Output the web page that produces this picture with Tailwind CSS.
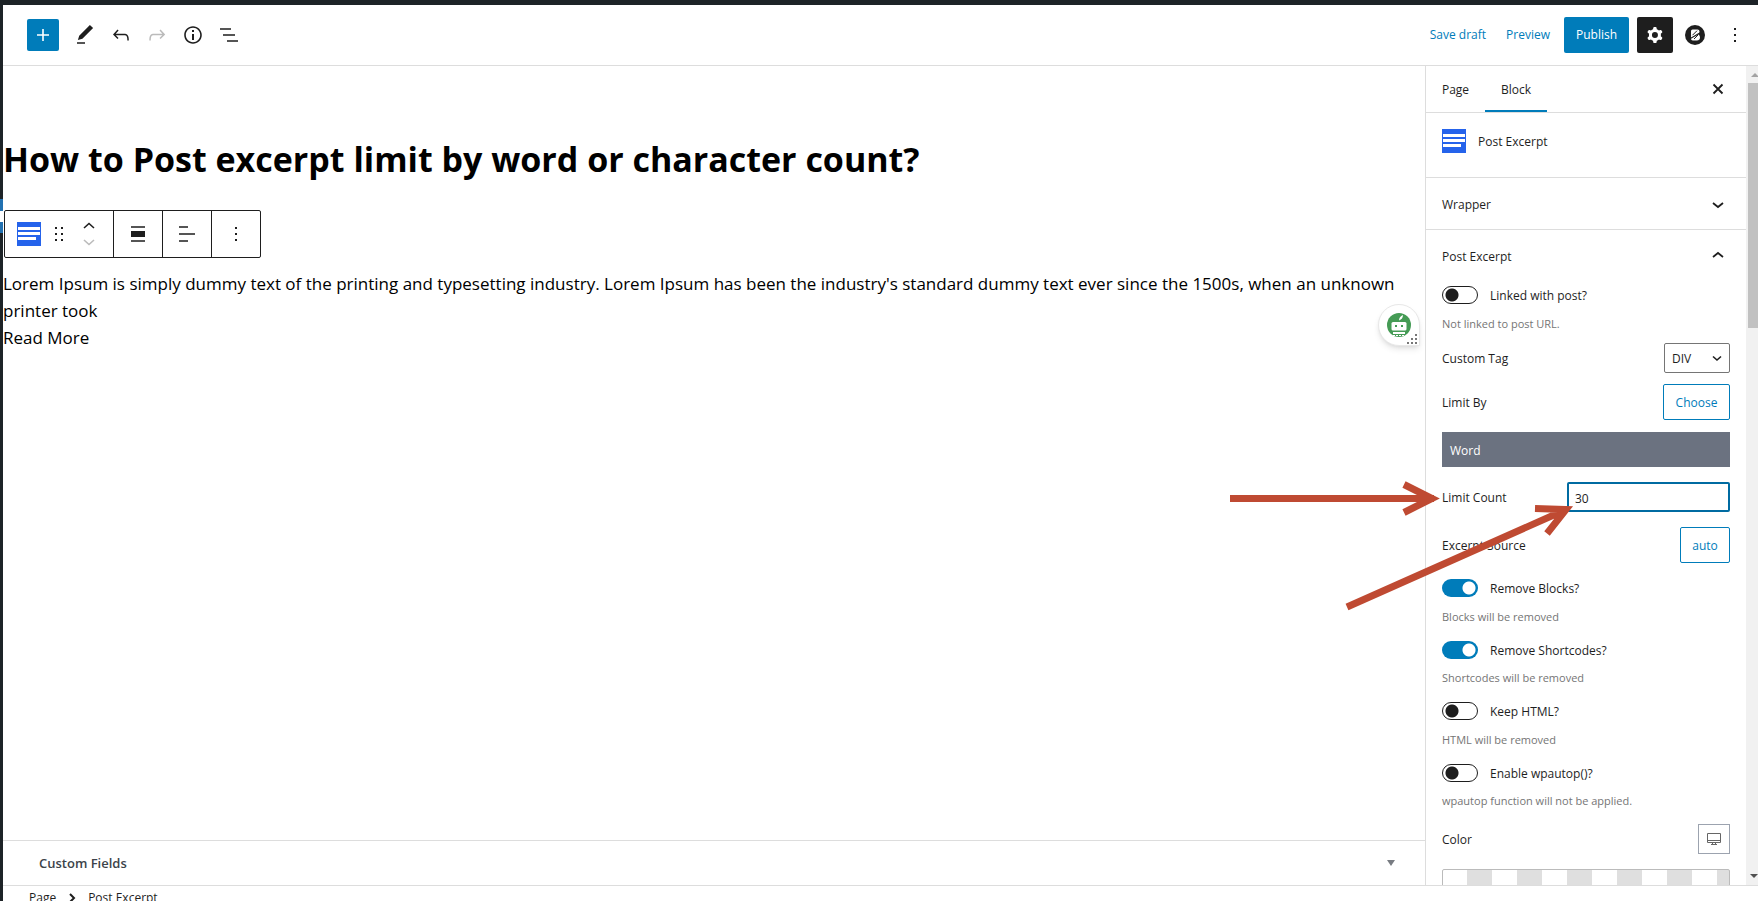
<!DOCTYPE html>
<html lang="en">
<head>
<meta charset="utf-8">
<title>Edit Page</title>
<script src="https://cdn.jsdelivr.net/npm/@tailwindcss/browser@4"></script>
</head>
<body class="h-screen overflow-hidden flex flex-col bg-white text-[#1e1e1e] text-[12px] leading-4 font-['Open_Sans','Noto_Sans',sans-serif]">
<div class="h-[5px] shrink-0 bg-[#1d2327]"></div>
<div class="flex flex-1 min-h-0">
  <div class="w-[3px] shrink-0 bg-[#1d2327] flex flex-col pt-[194px]">
    <div class="h-[34px] bg-[#2271b1] flex items-center"><span class="block w-full h-[11px] bg-white"></span></div>
  </div>
  <div class="flex-1 min-w-0 flex flex-col">
    <header class="h-[61px] shrink-0 border-b border-[#ddd] flex items-center justify-between pl-6 pr-[11px]">
      <div class="flex items-center gap-3">
        <button aria-label="Add block" class="size-8 rounded-[2px] bg-[#007cba] text-white grid place-items-center mr-[2px]"><svg width="24" height="24" viewBox="0 0 24 24" fill="currentColor"><path d="M18 11.2h-5.2V6h-1.6v5.2H6v1.6h5.2V18h1.6v-5.2H18z"/></svg></button>
        <button aria-label="Tools" class="w-6"><svg width="24" height="24" viewBox="0 0 24 24" fill="currentColor"><path d="M20.1 5.1 16.9 2 6.2 12.7l-1.3 4.4 4.5-1.3L20.1 5.1zM4 19.2h8v1.6H4z"/></svg></button>
        <button aria-label="Undo" class="w-6"><svg width="24" height="24" viewBox="0 0 24 24" fill="currentColor"><path d="M18.3 11.7c-.6-.6-1.4-.9-2.3-.9H6.7l2.9-3.3-1.1-1-4.5 5L8.500 16l1-1-2.700-2.700H16c.5 0 .9.2 1.300.5 1 1 1 3.400 1 4.500v.3h1.500v-.2c0-1.500 0-4.300-1.500-5.700z"/></svg></button>
        <button aria-label="Redo" class="w-6 text-[#bbb]"><svg width="24" height="24" viewBox="0 0 24 24" fill="currentColor"><path d="M15.600 6.500l-1.100 1 2.900 3.300H8c-.9 0-1.700.3-2.300.9-1.400 1.500-1.400 4.200-1.400 5.600v.2h1.500v-.3c0-1.100 0-3.500 1-4.500.3-.3.7-.5 1.300-.5h9.200L14.500 15l1.100 1.100 4.600-4.600-4.600-5z"/></svg></button>
        <button aria-label="Details" class="w-6"><svg width="24" height="24" viewBox="0 0 24 24" fill="currentColor"><path d="M12 3.200c-4.800 0-8.800 3.900-8.800 8.800 0 4.800 3.900 8.800 8.800 8.800 4.800 0 8.800-3.900 8.800-8.800 0-4.800-4-8.800-8.800-8.800zm0 16c-4 0-7.200-3.300-7.200-7.200C4.800 8 8 4.800 12 4.800s7.200 3.300 7.200 7.200c0 4-3.200 7.200-7.200 7.200zM11 17h2v-6h-2v6zm0-8h2V7h-2v2z"/></svg></button>
        <button aria-label="List view" class="w-6"><svg width="24" height="24" viewBox="0 0 24 24" fill="currentColor"><path d="M3 5.200h11v1.600H3zM6 11.200h12v1.600H6zM10 17.200h11v1.600H10z"/></svg></button>
      </div>
      <div class="flex items-center">
        <button class="text-[#007cba] mr-5">Save draft</button>
        <button class="text-[#007cba] mr-[14px]">Preview</button>
        <button class="h-9 w-[65px] rounded-[2px] bg-[#007cba] text-white mr-2">Publish</button>
        <button aria-label="Settings" class="size-9 rounded-[2px] bg-[#1e1e1e] text-white grid place-items-center mr-[10px]"><svg width="24" height="24" viewBox="0 0 24 24" fill="currentColor"><path fill-rule="evenodd" d="M10.289 4.836A1 1 0 0111.275 4h1.306a1 1 0 01.987.836l.244 1.466c.787.260 1.503.679 2.108 1.218l1.393-.522a1 1 0 011.216.437l.653 1.130a1 1 0 01-.230 1.273l-1.148.944a6.025 6.025 0 010 2.435l1.149.946a1 1 0 01.230 1.272l-.653 1.130a1 1 0 01-1.216.437l-1.394-.522c-.605.540-1.320.958-2.108 1.218l-.244 1.466a1 1 0 01-.987.836h-1.306a1 1 0 01-.986-.836l-.244-1.466a5.995 5.995 0 01-2.108-1.218l-1.394.522a1 1 0 01-1.217-.436l-.653-1.131a1 1 0 01.230-1.272l1.149-.946a6.026 6.026 0 010-2.435l-1.148-.944a1 1 0 01-.230-1.272l.653-1.131a1 1 0 011.217-.437l1.393.522a5.994 5.994 0 012.108-1.218l.244-1.466zM14.929 12a3 3 0 11-6 0 3 3 0 016 0z" clip-rule="evenodd"/></svg></button>
        <button aria-label="Blocks" class="mr-4"><svg width="24" height="24" viewBox="0 0 24 24"><circle cx="12" cy="12" r="10" fill="#1e1e1e"/><path d="M9.500 6.500h5q2 0 2 2 0 .8-.5 1.200L8 14.500V8q0-1.500 1.500-1.500z" fill="#fff"/><path d="M8 15.800l7.500-4.300q1.500 1 1.500 2.800 0 3.200-3.200 3.200H9.700Q8 17.500 8 15.800z" fill="#fff"/><path d="M9.500 12.200l4.500-4.500M11 16l4-4" stroke="#1e1e1e"/></svg></button>
        <button aria-label="Options"><svg width="24" height="24" viewBox="0 0 24 24" fill="currentColor"><path d="M11 5h2v2h-2zM11 11h2v2h-2zM11 17h2v2h-2z"/></svg></button>
      </div>
    </header>

    <div class="relative flex flex-1 min-h-0">
      <main class="flex-1 min-w-0 flex flex-col">
        <div class="relative flex-1 min-h-0 text-black">
          <h1 class="pt-[68px] text-[34px] leading-[50px] font-bold">How to Post excerpt limit by word or character count?</h1>
          <div role="toolbar" class="mt-[26px] ml-px w-fit h-12 flex border border-[#1e1e1e] rounded-[2px] divide-x divide-[#1e1e1e] text-[#1e1e1e]">
            <div class="flex items-center w-[109px] pl-3">
              <button aria-label="Post Excerpt"><svg width="24" height="24" viewBox="0 0 24 24"><path fill="#2563eb" d="M0 0h24v24H0z"/><path fill="#fff" d="M1 5h22v3H1zM1 10h22v3H1zM1 15h18v3H1z"/></svg></button>
              <button aria-label="Drag" class="ml-[6px]"><svg width="24" height="24" viewBox="0 0 24 24" fill="currentColor"><path d="M8 5h2v2H8zM14 5h2v2h-2zM8 11h2v2H8zM14 11h2v2h-2zM8 17h2v2H8zM14 17h2v2h-2z"/></svg></button>
              <div class="flex flex-col gap-1 ml-3">
                <button aria-label="Move up"><svg width="12" height="7" viewBox="0 0 12 7" fill="none" stroke="currentColor" stroke-width="1.600"><path d="M1 6l5-4.500L11 6"/></svg></button>
                <button aria-label="Move down" class="mt-[6px] text-[#bbb]"><svg width="12" height="7" viewBox="0 0 12 7" fill="none" stroke="currentColor" stroke-width="1.600"><path d="M1 1l5 4.500L11 1"/></svg></button>
              </div>
            </div>
            <button aria-label="Align" class="w-[49px] grid place-items-center"><svg width="24" height="24" viewBox="0 0 24 24" fill="currentColor"><path d="M5 4.200h14v1.600H5zM5 9h14v6H5zM5 18.200h14v1.600H5z"/></svg></button>
            <button aria-label="Text align" class="w-[49px] grid place-items-center"><svg width="24" height="24" viewBox="0 0 24 24" fill="currentColor"><path d="M4 4.200h9v1.600H4zM4 11.200h16v1.600H4zM4 18.200h9v1.600H4z"/></svg></button>
            <button aria-label="More" class="w-12 grid place-items-center"><svg width="24" height="24" viewBox="0 0 24 24" fill="currentColor"><path d="M11 5h2v2h-2zM11 11h2v2h-2zM11 17h2v2h-2z"/></svg></button>
          </div>
          <p class="mt-3 pr-4 text-[17px] leading-[27px]">Lorem Ipsum is simply dummy text of the printing and typesetting industry. Lorem Ipsum has been the industry's standard dummy text ever since the 1500s, when an unknown printer took<br><a href="#">Read More</a></p>
          <button aria-label="Writing assistant" class="absolute right-[5px] top-[238px] size-[42px] rounded-full rounded-br-none bg-white border border-[#e8e8e8] shadow-md">
            <svg width="40" height="40" viewBox="0 0 40 40"><circle cx="20" cy="20" r="12" fill="#459b55"/><path d="M14 17h12q1.500 0 1.500 1.500V24q0 1.500-1.500 1.500H14q-1.500 0-1.500-1.500v-5.500Q12.500 17 14 17z" fill="#fff"/><path d="M20 15.500q0-4 4-5.500 0 4-4 5.500zM14 27h12v2H14z" fill="#fff"/><path d="M16 20h2v2h-2zM22 20h2v2h-2z" fill="#459b55"/><path d="M14 30.500h12" stroke="#fff" stroke-dasharray="2 1"/><path fill="#777" d="M36 29h2v2h-2zM32 33h2v2h-2zM36 33h2v2h-2zM28 37h2v2h-2zM32 37h2v2h-2zM36 37h2v2h-2z"/></svg>
          </button>
        </div>
        <button class="h-[45px] shrink-0 border-t border-[#ddd] flex items-center justify-between pl-9 pr-7 text-[13px] font-semibold text-[#3c434a]">Custom Fields
          <svg width="12" height="8" viewBox="0 0 12 8" fill="#787c82"><path d="M2 1h8L6 7z"/></svg></button>
      </main>

      <aside class="w-[321px] shrink-0 border-l border-[#ddd] overflow-hidden">
        <div class="h-[47px] border-b border-[#ddd] flex items-stretch pr-4">
          <button class="w-[59px] pt-[2px]">Page</button>
          <button class="w-[62px] border-b-2 border-[#007cba] pt-1">Block</button>
          <button aria-label="Close settings" class="ml-auto w-6 grid place-items-center"><svg width="24" height="24" viewBox="0 0 24 24" fill="none" stroke="currentColor" stroke-width="1.800"><path d="M7.500 7.500l9 9M16.500 7.500l-9 9"/></svg></button>
        </div>
        <div class="h-[65px] border-b border-[#ddd] flex items-start gap-3 px-4 pt-4">
          <svg width="24" height="24" viewBox="0 0 24 24"><path fill="#2563eb" d="M0 0h24v24H0z"/><path fill="#fff" d="M1 5h22v3H1zM1 10h22v3H1zM1 15h18v3H1z"/></svg>
          <h2 class="leading-[26px] font-medium">Post Excerpt</h2>
        </div>
        <button class="w-full h-[52px] border-b border-[#ddd] flex items-center justify-between pl-4 pr-[22px] pt-[2px] font-medium">Wrapper
          <svg width="12" height="8" viewBox="0 0 12 8" fill="none" stroke="currentColor" stroke-width="1.800"><path d="M1 2l5 4 5-4"/></svg></button>
        <button class="w-full h-[53px] flex items-center justify-between pl-4 pr-[22px] font-medium">Post Excerpt
          <svg class="mb-1" width="12" height="8" viewBox="0 0 12 8" fill="none" stroke="currentColor" stroke-width="1.800"><path d="M1 6l5-4 5 4"/></svg></button>

        <div class="px-4">
          <div class="h-[60px]">
            <label class="flex items-center gap-3 h-6"><input type="checkbox" role="switch" class="appearance-none w-9 h-[18px] rounded-full border border-[#1e1e1e] bg-[radial-gradient(circle_at_9px_8px,#1e1e1e_6px,transparent_7px)]"><span class="pt-[2px]">Linked with post?</span></label>
            <p class="mt-[9px] text-[11px] text-[#757575]">Not linked to post URL.</p>
          </div>
          <div class="flex items-center justify-between h-[30px]">
            <label for="tag" class="pt-[2px]">Custom Tag</label>
            <div class="relative"><select id="tag" class="appearance-none block w-[66px] h-[30px] border border-[#757575] rounded-[2px] pl-[7px] pt-px bg-white"><option>DIV</option></select>
            <svg class="absolute right-2 top-3 pointer-events-none" width="10" height="7" viewBox="0 0 10 7" fill="none" stroke="currentColor" stroke-width="1.600"><path d="M1 1.500l4 3.500 4-3.500"/></svg></div>
          </div>
          <div class="mt-[11px] flex items-center justify-between"><span class="pt-[2px]">Limit By</span><button class="h-9 w-[67px] pt-[2px] border border-[#007cba] rounded-[2px] text-[#007cba]">Choose</button></div>
          <div class="mt-3 h-[35px] bg-[#6b7280] text-white flex items-center px-2 pt-[2px] font-medium">Word</div>
          <div class="mt-[15px] flex items-center justify-between"><label for="count" class="pt-[2px]">Limit Count</label><input id="count" type="text" value="30" class="w-[163px] h-[30px] border-2 border-[#006ba1] rounded-[2px] px-[6px] pt-[2px]"></div>
          <div class="mt-[15px] flex items-center justify-between"><span class="pt-[2px]">Excerpt Source</span><button class="h-9 w-[50px] pt-[2px] border border-[#007cba] rounded-[2px] text-[#007cba]">auto</button></div>
          <div class="mt-[13px] h-[62px]">
            <label class="flex items-center gap-3 h-6"><input type="checkbox" role="switch" checked class="appearance-none w-9 h-[18px] rounded-full bg-[#007cba] bg-[radial-gradient(circle_at_27px_9px,white_6px,transparent_7px)]"><span class="pt-[2px]">Remove Blocks?</span></label>
            <p class="mt-[9px] text-[11px] text-[#757575]">Blocks will be removed</p>
          </div>
          <div class="h-[61px]">
            <label class="flex items-center gap-3 h-6"><input type="checkbox" role="switch" checked class="appearance-none w-9 h-[18px] rounded-full bg-[#007cba] bg-[radial-gradient(circle_at_27px_9px,white_6px,transparent_7px)]"><span class="pt-[2px]">Remove Shortcodes?</span></label>
            <p class="mt-2 text-[11px] text-[#757575]">Shortcodes will be removed</p>
          </div>
          <div class="h-[62px]">
            <label class="flex items-center gap-3 h-6"><input type="checkbox" role="switch" class="appearance-none w-9 h-[18px] rounded-full border border-[#1e1e1e] bg-[radial-gradient(circle_at_9px_8px,#1e1e1e_6px,transparent_7px)]"><span class="pt-[2px]">Keep HTML?</span></label>
            <p class="mt-[9px] text-[11px] text-[#757575]">HTML will be removed</p>
          </div>
          <div class="h-[63px]">
            <label class="flex items-center gap-3 h-6"><input type="checkbox" role="switch" class="appearance-none w-9 h-[18px] rounded-full border border-[#1e1e1e] bg-[radial-gradient(circle_at_9px_8px,#1e1e1e_6px,transparent_7px)]"><span class="pt-[2px]">Enable wpautop()?</span></label>
            <p class="mt-2 text-[11px] text-[#757575]">wpautop function will not be applied.</p>
          </div>
          <div class="flex items-center justify-between"><span class="pt-[2px]">Color</span><button aria-label="Desktop" class="w-8 h-[30px] border border-[#9ca3af] grid place-items-center"><svg width="14" height="14" viewBox="0 0 14 14" fill="none" stroke="#666"><path d="M.5 1.500h13v9H.5zM.5 8.500h13M5.500 10.500v2M8.500 10.500v2M4 12.500h6"/></svg></button></div>
          <div class="mt-[15px] h-[30px] border border-[#bbb] rounded-[2px] bg-[repeating-linear-gradient(90deg,white_0_24px,#dfdfdf_24px_49px,white_49px_50px)]"></div>
        </div>
      </aside>
      <div class="w-3 shrink-0 overflow-hidden bg-[#f1f1f1] pl-[2px] flex flex-col items-start justify-between">
        <div class="w-[15px]">
          <svg class="block" width="13" height="17" viewBox="0 0 13 17" fill="#a3a3a3"><path d="M3 11l4-4 4 4z"/></svg>
          <div class="h-[245px] bg-[#c1c1c1]"></div>
        </div>
        <svg class="block" width="13" height="17" viewBox="0 0 13 17" fill="#505050"><path d="M2 6h8l-4 4z"/></svg>
      </div>

      <svg class="absolute right-[184px] top-[404px] pointer-events-none" width="350" height="150" viewBox="1224 470 350 150" fill="none" stroke="#bf4a32" stroke-width="7"><path d="M1230 498.500h204M1404 484.500l28 14-28 14M1347 607l218-97M1535 508.500l31 1-19 24"/></svg>
    </div>

    <footer class="h-4 shrink-0 border-t border-[#ddd] overflow-hidden">
      <nav aria-label="Breadcrumb" class="flex items-center gap-3 pl-[26px] pt-1"><a href="#">Page</a>
        <svg width="8" height="10" viewBox="0 0 8 10" fill="none" stroke="currentColor" stroke-width="2"><path d="M2 1l4 4-4 4"/></svg><a href="#">Post Excerpt</a></nav>
    </footer>
  </div>
</div>
</body>
</html>
